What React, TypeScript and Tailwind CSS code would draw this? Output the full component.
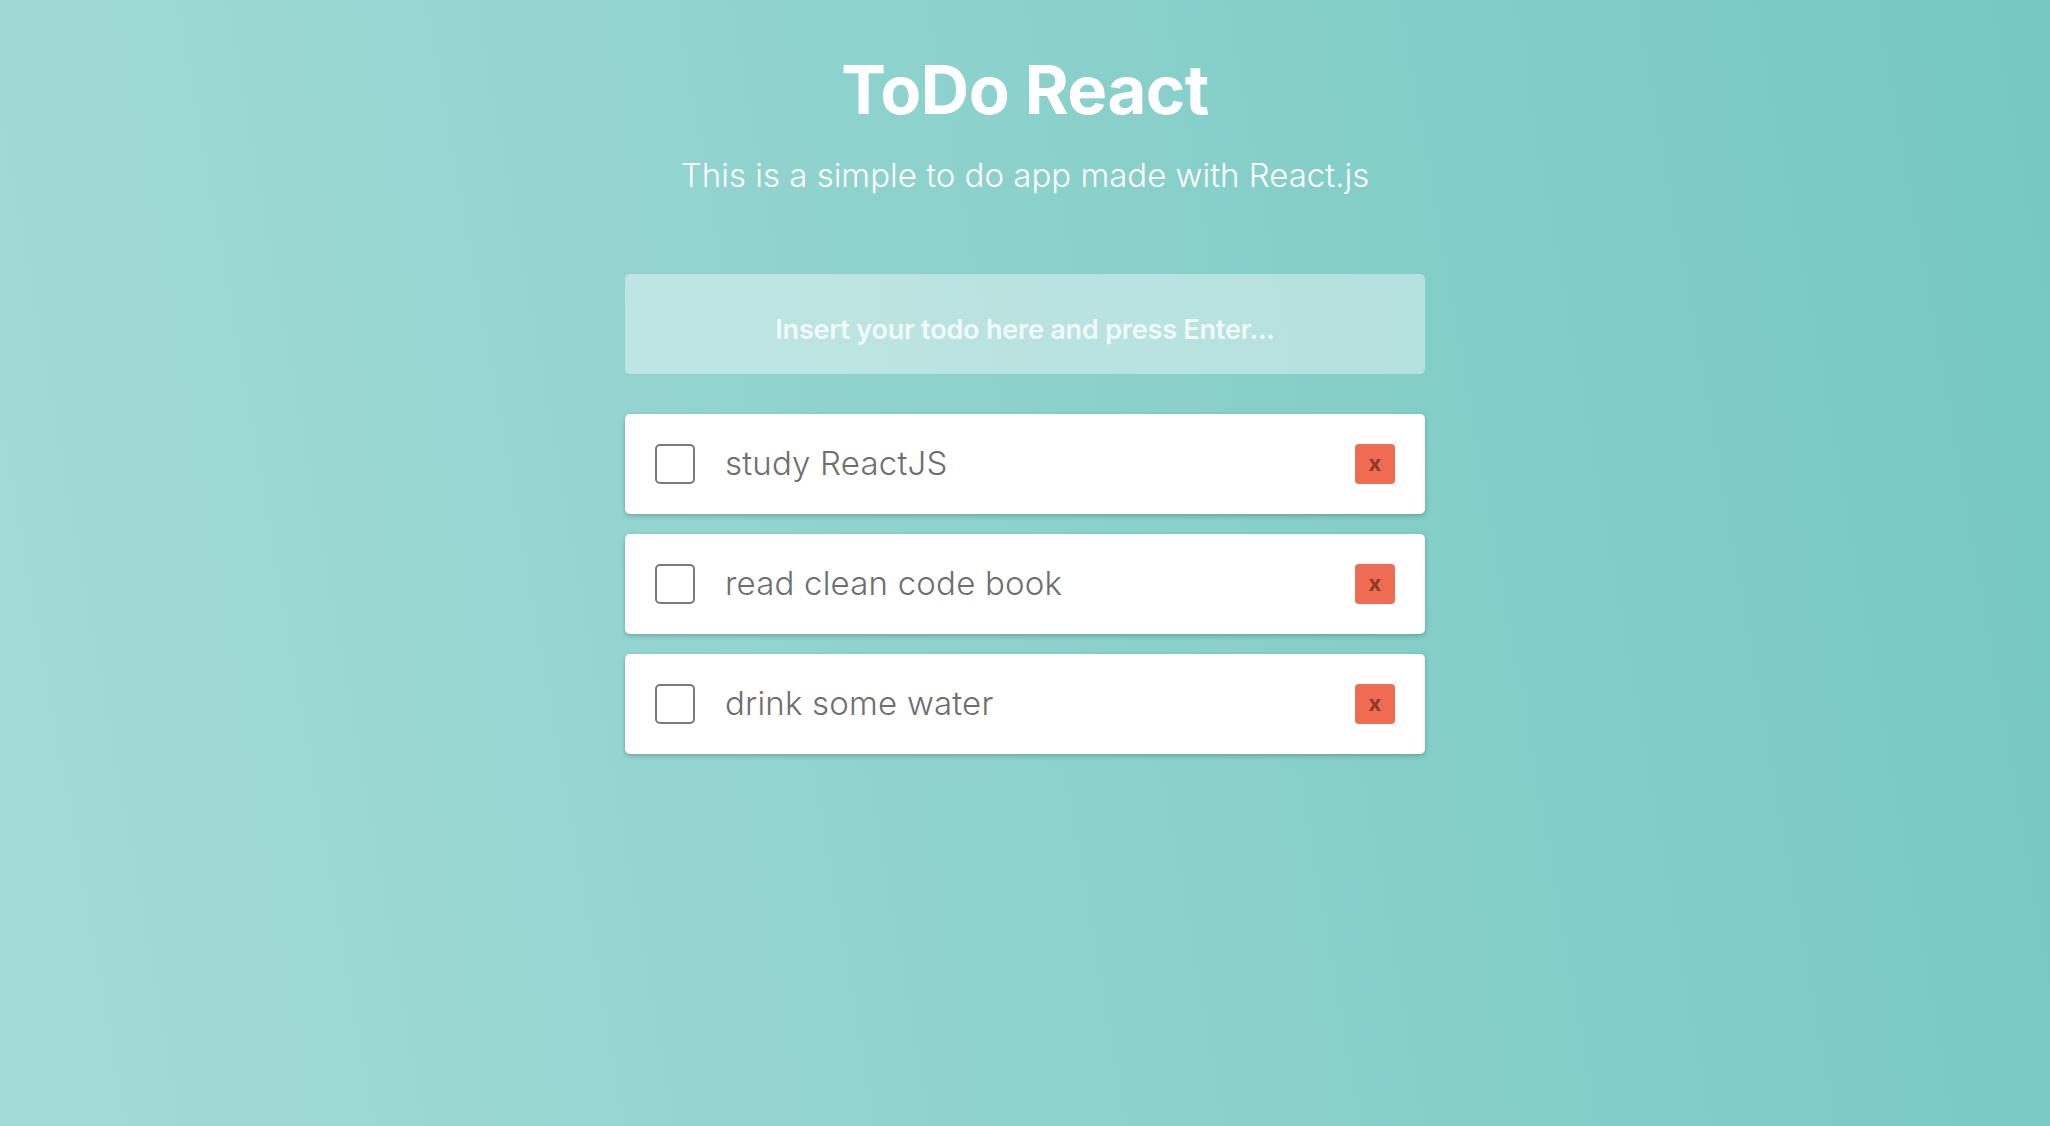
import React, { useState } from 'react';

interface Todo {
  id: number;
  text: string;
  done: boolean;
}

const initialTodos: Todo[] = [
  { id: 1, text: 'study ReactJS', done: false },
  { id: 2, text: 'read clean code book', done: false },
  { id: 3, text: 'drink some water', done: false },
];

function TodoItem({ todo, onToggle, onRemove }: { todo: Todo; onToggle: () => void; onRemove: () => void }) {
  return (
    <div className="flex items-center h-[100px] bg-white rounded-[5px] shadow-[0_2px_5px_rgba(0,0,0,0.22)] pl-[30px] pr-[30px]">
      <button
        onClick={onToggle}
        className="w-[40px] h-[40px] border-2 border-[#7a7a7a] rounded-[5px] shrink-0"
      />
      <span className="ml-[30px] flex-1 text-[33px] font-light text-[#6e6e6e] tracking-[0.2px]">
        {todo.text}
      </span>
      <button
        onClick={onRemove}
        className="w-[40px] h-[40px] rounded-[4px] bg-[#ef6b52] text-[#8c3b2b] text-[22px] font-bold leading-none flex items-center justify-center pb-[3px]"
      >
        x
      </button>
    </div>
  );
}

export default function App() {
  const [todos, setTodos] = useState<Todo[]>(initialTodos);
  const [value, setValue] = useState('');

  const addTodo = (e: React.KeyboardEvent<HTMLInputElement>) => {
    if (e.key !== 'Enter' || !value.trim()) return;
    setTodos([...todos, { id: Date.now(), text: value.trim(), done: false }]);
    setValue('');
  };

  return (
    <div
      className="min-h-[1126px] w-full bg-linear-[80deg] from-[#a3dbd8] to-[#76c8c1] flex flex-col items-center"
      style={{ fontFamily: 'Inter, "Noto Sans", sans-serif' }}
    >
      <h1 className="mt-[56px] text-[67px] leading-none font-bold text-white tracking-[-0.5px]">ToDo React</h1>
      <p className="mt-[36px] text-[33px] leading-none font-light text-white">
        This is a simple to do app made with React.js
      </p>

      <div className="w-[800px] mt-[82px] flex flex-col">
        <input
          value={value}
          onChange={(e) => setValue(e.target.value)}
          onKeyDown={addTodo}
          placeholder="Insert your todo here and press Enter..."
          className="h-[100px] w-full rounded-[5px] bg-white/40 text-center text-[27px] font-semibold text-white placeholder:text-white/80 outline-none tracking-[-0.2px] pt-[10px]"
        />

        <div className="mt-[40px] flex flex-col gap-[20px]">
          {todos.map((t) => (
            <TodoItem
              key={t.id}
              todo={t}
              onToggle={() => setTodos(todos.map((x) => (x.id === t.id ? { ...x, done: !x.done } : x)))}
              onRemove={() => setTodos(todos.filter((x) => x.id !== t.id))}
            />
          ))}
        </div>
      </div>
    </div>
  );
}
